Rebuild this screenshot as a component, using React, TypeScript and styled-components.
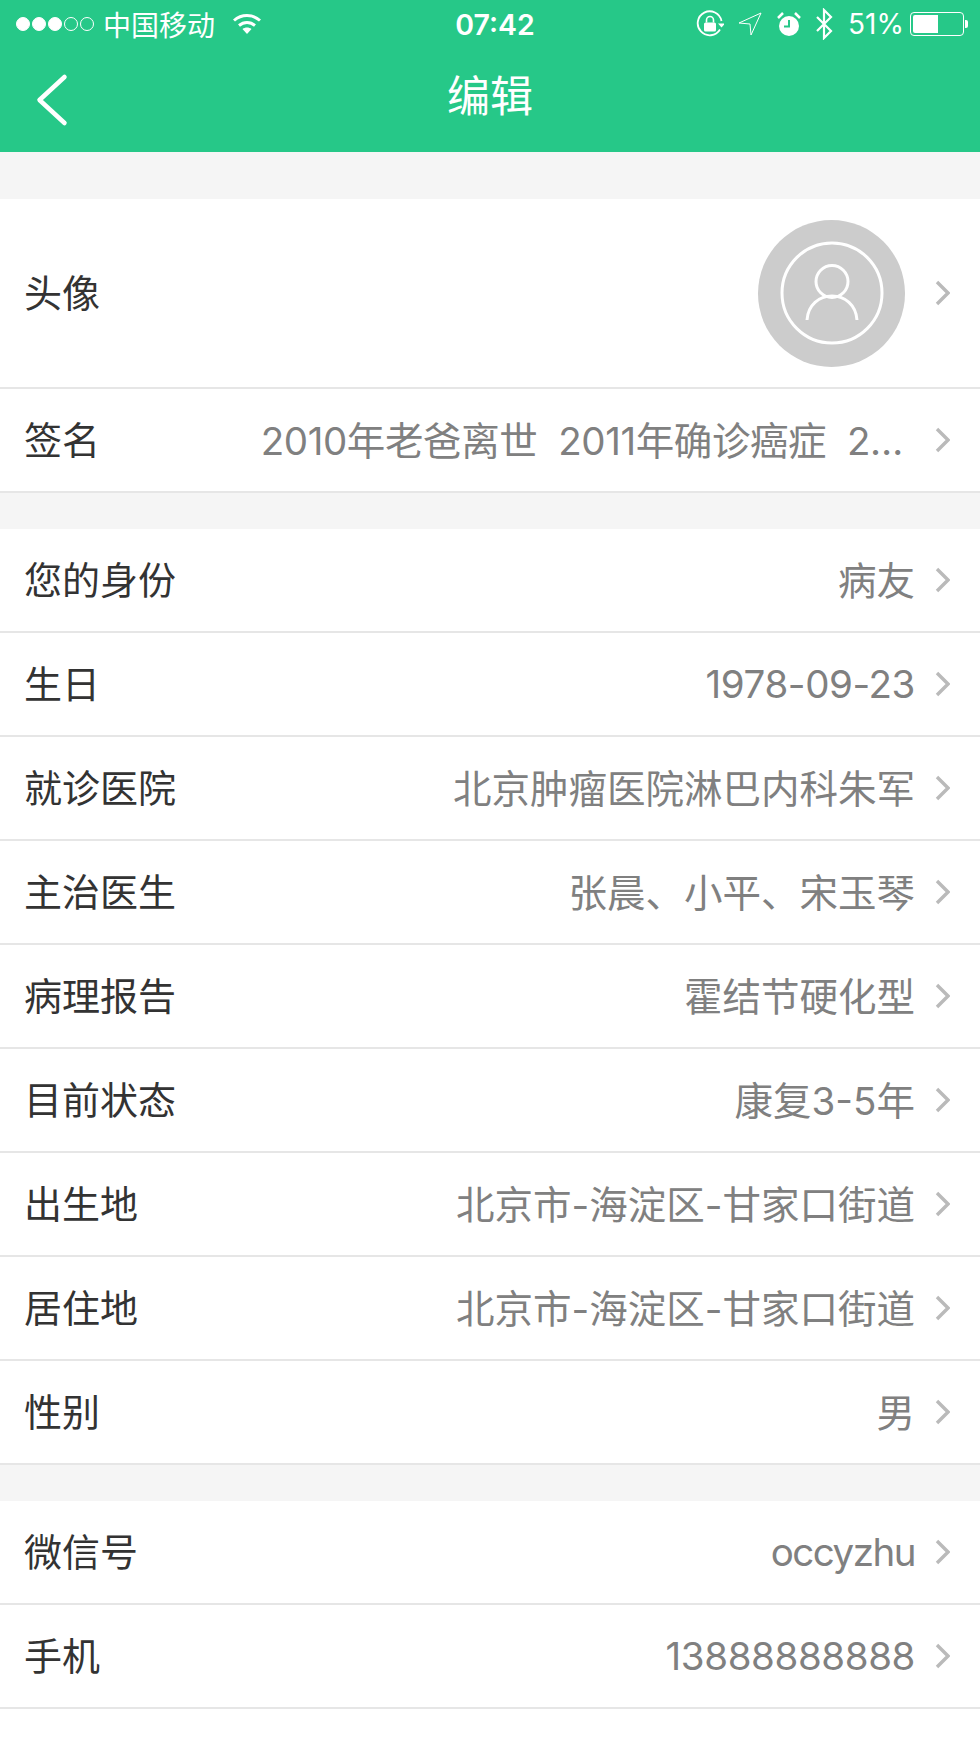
import React from 'react'
import styled, { createGlobalStyle } from 'styled-components'

interface RowData {
	label: string
	value: string
	latin?: boolean
	tight?: boolean
}

const signature = '2010年老爸离世  2011年确诊癌症  2…'

const profileRows: RowData[] = [
	{ label: '您的身份', value: '病友' },
	{ label: '生日', value: '1978-09-23', latin: true },
	{ label: '就诊医院', value: '北京肿瘤医院淋巴内科朱军' },
	{ label: '主治医生', value: '张晨、小平、宋玉琴' },
	{ label: '病理报告', value: '霍结节硬化型' },
	{ label: '目前状态', value: '康复3-5年' },
	{ label: '出生地', value: '北京市-海淀区-甘家口街道' },
	{ label: '居住地', value: '北京市-海淀区-甘家口街道' },
	{ label: '性别', value: '男' },
]

const contactRows: RowData[] = [
	{ label: '微信号', value: 'occyzhu', latin: true, tight: true },
	{ label: '手机', value: '13888888888', latin: true },
]

const Chevron = () => (
	<ChevronIcon viewBox="0 0 15 26">
		<path d="M2 2l11 11L2 24" fill="none" stroke="#bababa" strokeWidth="3.4" />
	</ChevronIcon>
)

const SettingRow: React.FC<RowData> = ({ label, value, latin, tight }) => (
	<Row>
		<Label>{label}</Label>
		<Value $latin={latin} $tight={tight}>{value}</Value>
		<Chevron />
	</Row>
)

const App: React.FC = () => {
	return (
		<Page>
			<GlobalStyle />
			<Header>
				<StatusBar>
					<StatusLeft>
						<Signal>
							<Dot $on />
							<Dot $on />
							<Dot $on />
							<Dot />
							<Dot />
						</Signal>
						<Carrier>中国移动</Carrier>
						<svg width="30" height="22" viewBox="0 0 30 22">
							<path d="M2 7.5C9.500 .8 20.500 .8 28 7.500" fill="none" stroke="#fff" strokeWidth="3" />
							<path d="M7 12.500c4.800-4 11.200-4 16 0" fill="none" stroke="#fff" strokeWidth="3" />
							<path d="M10.500 16c2.700-2 6.300-2 9 0L15 21z" fill="#fff" />
						</svg>
					</StatusLeft>
					<Clock>07:42</Clock>
					<StatusRight>
						<svg width="28" height="28" viewBox="0 0 28 28">
							<path d="M24 19.500A12 12 0 1 1 25.500 11" fill="none" stroke="#fff" strokeWidth="1.800" />
							<path d="M22 13.500h7l-3.500 4z" fill="#fff" />
							<rect x="8" y="12.500" width="12" height="9" rx="1.500" fill="#fff" />
							<path d="M10.500 12.500V10a3.500 3.500 0 0 1 7 0v2.500" fill="none" stroke="#fff" strokeWidth="1.600" />
						</svg>
						<LocationIcon width="24" height="24" viewBox="0 0 24 24">
							<path d="M1 11L23 1L13 23L12 12z" fill="none" stroke="#fff" strokeWidth="1" />
						</LocationIcon>
						<AlarmIcon width="24" height="26" viewBox="0 0 24 26">
							<circle cx="12" cy="15" r="10" fill="#fff" />
							<path d="M12 9v6.500H7" fill="none" stroke="#26c888" strokeWidth="2" />
							<path d="M1 7l5-5M23 7l-5-5" fill="none" stroke="#fff" strokeWidth="2.500" />
						</AlarmIcon>
						<BluetoothIcon width="18" height="32" viewBox="0 0 18 32">
							<path d="M2 9l14 14-7 7V2l7 7L2 23" fill="none" stroke="#fff" strokeWidth="2.200" />
						</BluetoothIcon>
						<Percent>51%</Percent>
						<Battery>
							<BatteryFill style={{ width: '53%' }} />
						</Battery>
						<BatteryNub />
					</StatusRight>
				</StatusBar>
				<NavBar>
					<BackIcon width="32" height="54" viewBox="0 0 32 54">
						<path d="M28.500 4L3.500 27l25 23" fill="none" stroke="#fff" strokeWidth="4.500" strokeLinecap="round" strokeLinejoin="round" />
					</BackIcon>
					<Title>编辑</Title>
				</NavBar>
			</Header>

			<Group>
				<AvatarRow>
					<Label>头像</Label>
					<Avatar>
						<svg width="104" height="104" viewBox="0 0 104 104">
							<circle cx="52" cy="52" r="50" fill="none" stroke="#fff" strokeWidth="3" />
							<circle cx="52" cy="40.500" r="16" fill="none" stroke="#fff" strokeWidth="3" />
							<path d="M27 79c1-15 12-24 25-24s24 9 25 24" fill="none" stroke="#fff" strokeWidth="3" />
						</svg>
					</Avatar>
					<Chevron />
				</AvatarRow>
				<Row>
					<Label>签名</Label>
					<Signature>{signature}</Signature>
					<Chevron />
				</Row>
			</Group>

			<Group>
				{profileRows.map((row) => (
					<SettingRow key={row.label} {...row} />
				))}
			</Group>

			<LastGroup>
				{contactRows.map((row) => (
					<SettingRow key={row.label} {...row} />
				))}
			</LastGroup>
		</Page>
	)
}

const GlobalStyle = createGlobalStyle`
	body {
		margin: 0;
		background: #f5f5f5;
		font-family: Inter, "Noto Sans CJK SC", sans-serif;
	}
`

const Page = styled.div`
	width: 980px;
	min-height: 1743px;
	background: #f5f5f5;
`

const Header = styled.header`
	height: 152px;
	background: #26c888;
	color: #fff;
`

const StatusBar = styled.div`
	height: 48px;
	display: grid;
	grid-template-columns: 1fr auto 1fr;
	align-items: center;
`

const StatusLeft = styled.div`
	display: flex;
	align-items: center;
	padding-left: 16px;
`

const Signal = styled.div`
	display: flex;
	gap: 2px;
	margin-right: 9px;
`

const Dot = styled.span<{ $on?: boolean }>`
	width: 14px;
	height: 14px;
	border-radius: 50%;
	box-sizing: border-box;
	border: 1px solid #fff;
	background: ${(p) => (p.$on ? '#fff' : 'transparent')};
`

const Carrier = styled.span`
	font-size: 28px;
	margin-right: 17px;
`

const Clock = styled.span`
	font-size: 28.5px;
	font-weight: 600;
	margin-left: 10px;
`

const StatusRight = styled.div`
	display: flex;
	align-items: center;
	justify-content: flex-end;
	padding-right: 12px;
`

const LocationIcon = styled.svg`
	margin-left: 14px;
`

const AlarmIcon = styled.svg`
	margin-left: 15px;
`

const BluetoothIcon = styled.svg`
	margin-left: 14px;
`

const Percent = styled.span`
	font-size: 28px;
	margin-left: 15px;
`

const Battery = styled.div`
	width: 54px;
	height: 24px;
	margin-left: 6px;
	padding: 2px;
	box-sizing: border-box;
	border: 1px solid #fff;
	border-radius: 4px;
`

const BatteryFill = styled.div`
	height: 100%;
	background: #fff;
	border-radius: 2px 0 0 2px;
`

const BatteryNub = styled.div`
	width: 3px;
	height: 8px;
	margin-left: 1px;
	background: #fff;
	border-radius: 0 2px 2px 0;
`

const NavBar = styled.div`
	position: relative;
	height: 94px;
	display: flex;
	align-items: center;
	justify-content: center;
`

const BackIcon = styled.svg`
	position: absolute;
	left: 36px;
	top: 25px;
`

const Title = styled.h1`
	margin: 0 0 4px;
	font-size: 43px;
	font-weight: 400;
`

const Group = styled.section`
	margin-top: 36px;
	background: #fff;

	&:first-of-type {
		margin-top: 47px;
	}
`

const LastGroup = styled(Group)`
	padding-bottom: 34px;
`

const Row = styled.div`
	height: 104px;
	box-sizing: border-box;
	display: flex;
	align-items: center;
	padding: 0 30px 0 24px;
	border-bottom: 2px solid #e6e6e6;
`

const AvatarRow = styled(Row)`
	height: 190px;
	justify-content: space-between;
`

const Label = styled.span`
	flex: none;
	margin-bottom: 5px;
	font-size: 38px;
	color: #333;
`

const Value = styled.span<{ $latin?: boolean; $tight?: boolean }>`
	flex: 1;
	min-width: 0;
	margin-bottom: ${(p) => (p.$latin ? '0' : '4px')};
	font-size: 38.5px;
	letter-spacing: ${(p) => (p.$tight ? '-1.500px' : p.$latin ? '-0.400px' : '0')};
	color: #808080;
	text-align: right;
	white-space: pre;
`

const Signature = styled(Value)`
	padding-right: 12px;
	letter-spacing: -0.400px;
`

const Avatar = styled.div`
	width: 147px;
	height: 147px;
	margin-left: auto;
	margin-right: 10px;
	border-radius: 50%;
	background: #cccccc;
	display: flex;
	align-items: center;
	justify-content: center;
`

const ChevronIcon = styled.svg`
	flex: none;
	width: 15px;
	height: 26px;
	margin-left: 20px;
`

export default App
